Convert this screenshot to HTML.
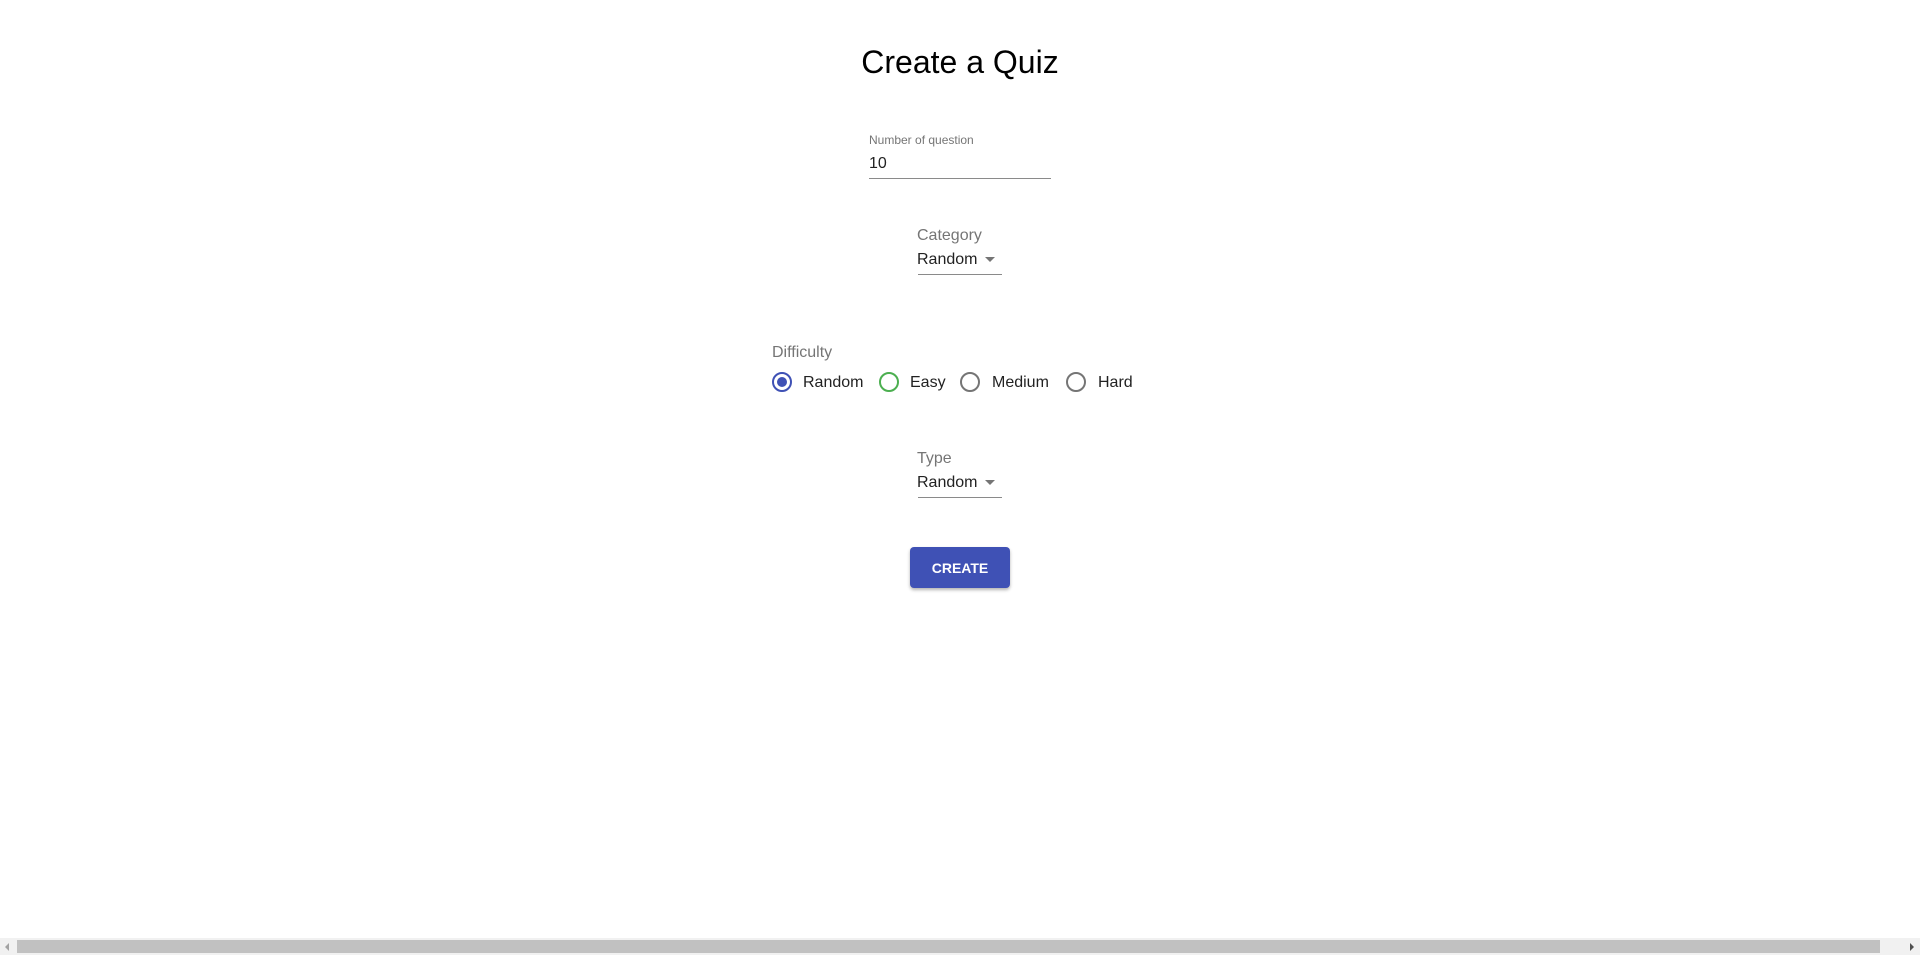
<!DOCTYPE html>
<html><head><style>
html,body{margin:0;padding:0;width:1920px;height:955px;overflow:hidden;background:#fff;font-family:"Liberation Sans",Roboto,sans-serif;}
.a{position:absolute;white-space:nowrap;}
.r{position:absolute;width:16px;height:16px;border:2px solid #757575;border-radius:50%;box-sizing:content-box;}
</style></head><body>
<div class="a" style="left:0;width:1920px;text-align:center;top:44px;font-size:32px;color:#000;">Create a Quiz</div>

<div class="a" style="left:869px;top:133px;font-size:12px;color:#757575;">Number of question</div>
<div class="a" style="left:869px;top:155px;font-size:16px;color:#222;">10</div>
<div class="a" style="left:869px;top:178px;width:182px;height:1px;background:#8a8a8a;"></div>

<div class="a" style="left:917px;top:227px;font-size:16px;color:#757575;">Category</div>
<div class="a" style="left:917px;top:251px;font-size:16px;color:#222;">Random</div>
<div class="a" style="left:985px;top:257px;width:0;height:0;border-left:5px solid transparent;border-right:5px solid transparent;border-top:5px solid #757575;"></div>
<div class="a" style="left:918px;top:274px;width:84px;height:1px;background:#8a8a8a;"></div>

<div class="a" style="left:772px;top:344px;font-size:16px;color:#757575;">Difficulty</div>
<div class="r" style="left:772px;top:372px;border-color:#3f51b5;"><div style="position:absolute;left:3px;top:3px;width:10px;height:10px;border-radius:50%;background:#3f51b5;"></div></div>
<div class="a" style="left:803px;top:374px;font-size:16px;color:#222;">Random</div>
<div class="r" style="left:879px;top:372px;border-color:#4caf50;"></div>
<div class="a" style="left:910px;top:374px;font-size:16px;color:#222;">Easy</div>
<div class="r" style="left:960px;top:372px;"></div>
<div class="a" style="left:992px;top:374px;font-size:16px;color:#222;">Medium</div>
<div class="r" style="left:1066px;top:372px;"></div>
<div class="a" style="left:1098px;top:374px;font-size:16px;color:#222;">Hard</div>

<div class="a" style="left:917px;top:450px;font-size:16px;color:#757575;">Type</div>
<div class="a" style="left:917px;top:474px;font-size:16px;color:#222;">Random</div>
<div class="a" style="left:985px;top:480px;width:0;height:0;border-left:5px solid transparent;border-right:5px solid transparent;border-top:5px solid #757575;"></div>
<div class="a" style="left:918px;top:497px;width:84px;height:1px;background:#8a8a8a;"></div>

<div class="a" style="left:910px;top:547px;width:100px;height:41px;background:#3f51b5;border-radius:4px;box-shadow:0 2px 3px rgba(0,0,0,.3);color:#fff;font-weight:bold;font-size:14px;text-align:center;line-height:42px;">CREATE</div>

<div class="a" style="left:0;top:938px;width:1920px;height:17px;background:#f1f1f1;"></div>
<div class="a" style="left:17px;top:940px;width:1863px;height:13px;background:#c1c1c1;"></div>
<div class="a" style="left:5px;top:943px;width:0;height:0;border-top:4px solid transparent;border-bottom:4px solid transparent;border-right:4px solid #a3a3a3;"></div>
<div class="a" style="left:1910px;top:943px;width:0;height:0;border-top:4px solid transparent;border-bottom:4px solid transparent;border-left:4px solid #505050;"></div>
</body></html>
